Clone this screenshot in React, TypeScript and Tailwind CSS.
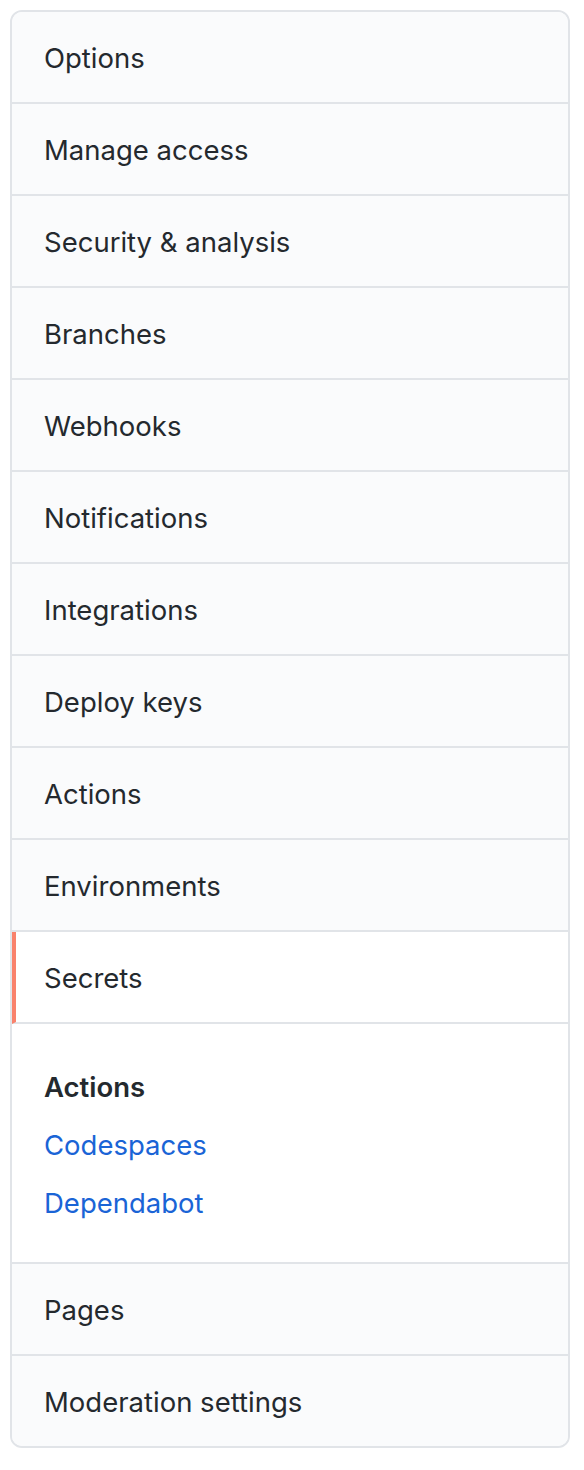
const ITEMS_TOP = [
  "Options",
  "Manage access",
  "Security & analysis",
  "Branches",
  "Webhooks",
  "Notifications",
  "Integrations",
  "Deploy keys",
  "Actions",
  "Environments",
];

const ITEMS_BOTTOM = ["Pages", "Moderation settings"];

function Row({ label }: { label: string }) {
  return (
    <div className="flex h-[92px] items-center border-b-2 border-[#e1e4e8] bg-[#fafbfc] pl-[32px] pt-[3px] text-[#24292e]">
      {label}
    </div>
  );
}

export default function App() {
  return (
    <div className="min-h-screen bg-white p-[10px]" style={{ fontFamily: "Inter, 'Noto Sans', sans-serif" }}>
      <nav className="w-[560px] overflow-hidden rounded-[12px] border-2 border-[#e1e4e8] text-[27.5px]">
        {ITEMS_TOP.map((l) => (
          <Row key={l} label={l} />
        ))}

        <div className="flex h-[92px] items-center border-b-2 border-l-4 border-[#e1e4e8] border-l-[#f9826c] bg-white pl-[28px] pt-[3px] text-[#24292e]">
          Secrets
        </div>

        <div className="border-b-2 border-[#e1e4e8] bg-white pb-[30px] pl-[32px] pt-[34px] leading-[58px]">
          <div className="font-semibold text-[#24292e]">Actions</div>
          <div className="text-[#1a64d6]">Codespaces</div>
          <div className="text-[#1a64d6]">Dependabot</div>
        </div>

        {ITEMS_BOTTOM.map((l, i) => (
          <div
            key={l}
            className={
              i === ITEMS_BOTTOM.length - 1
                ? "flex h-[90px] items-center bg-[#fafbfc] pl-[32px] pt-[3px] text-[#24292e]"
                : "flex h-[92px] items-center border-b-2 border-[#e1e4e8] bg-[#fafbfc] pl-[32px] pt-[3px] text-[#24292e]"
            }
          >
            {l}
          </div>
        ))}
      </nav>
    </div>
  );
}
